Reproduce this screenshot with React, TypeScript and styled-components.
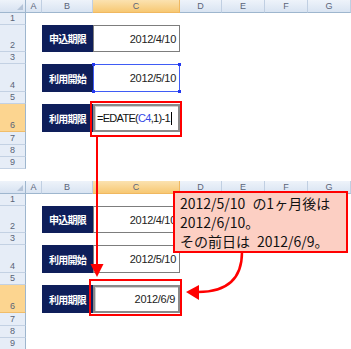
import styled, { createGlobalStyle, css } from "styled-components";

const GlobalStyle = createGlobalStyle`
  html, body {
    margin: 0;
    padding: 0;
    background: #fff;
  }
  body {
    font-family: "Liberation Sans", "Noto Sans CJK JP", sans-serif;
  }
`;

const COLS = ["A", "B", "C", "D", "E", "F", "G"];
const ROWS = [1, 2, 3, 4, 5, 6, 7, 8, 9];

type Step = "before" | "after";

function Sheet({ step }: { step: Step }) {
  return (
    <Grid>
      <Corner />
      {COLS.map((c) => (
        <ColHead key={c} active={c === "C"}>
          {c}
        </ColHead>
      ))}
      {ROWS.map((r) => (
        <RowHead key={r} row={r} active={r === 6}>
          {r}
        </RowHead>
      ))}

      <Label row={2}>申込期限</Label>
      <Value row={2}>2012/4/10</Value>

      <Label row={4}>利用開始</Label>
      {step === "before" ? (
        <Value row={4} kind="focus">
          2012/5/10
          <Handle pos="tl" />
          <Handle pos="tr" />
          <Handle pos="bl" />
          <Handle pos="br" />
        </Value>
      ) : (
        <Value row={4}>2012/5/10</Value>
      )}

      <Label row={6}>利用期限</Label>
      {step === "before" ? (
        <Value row={6} kind="edit">
          =EDATE(<Ref>C4</Ref>,1)-1
          <Caret />
        </Value>
      ) : (
        <Value row={6} kind="result">
          2012/6/9
        </Value>
      )}
    </Grid>
  );
}

export default function App() {
  return (
    <>
      <GlobalStyle />
      <Page>
        <Sheet step="before" />
        <Sheet step="after" />

        <RedFrame style={{ left: 90, top: 101, width: 92, height: 36 }} />
        <RedFrame style={{ left: 89, top: 279, width: 93, height: 37 }} />

        <Arrows width="351" height="349" viewBox="0 0 351 349">
          <line x1="97" y1="137" x2="97" y2="266" stroke="#ff0000" strokeWidth="2" />
          <polygon points="90.5,264 103.5,264 97,277" fill="#ff0000" />
          <path
            d="M242 252 C 242 278 228 292 198 292"
            fill="none"
            stroke="#ff0000"
            strokeWidth="2.5"
          />
          <polygon points="186,292 199,285 199,300" fill="#ff0000" />
        </Arrows>

        <Callout>
          2012/5/10{"\u2002"}の1ヶ月後は
          <br />
          2012/6/10。
          <br />
          その前日は{"\u2002"}2012/6/9。
        </Callout>
      </Page>
    </>
  );
}

const Page = styled.div`
  position: relative;
  width: 351px;
  height: 349px;
  overflow: hidden;
  display: flex;
  flex-direction: column;
  gap: 12px;
`;

const Grid = styled.div`
  display: grid;
  grid-template-columns: 26px 16px 51px 87px 42px 43px 43px 43px;
  grid-template-rows: 13px 12px 27px 12px 28px 12px 28px 13px 12px 12px;
  background: #fff;
  flex: none;
`;

const headBase = css`
  box-sizing: border-box;
  font-family: "Liberation Sans", sans-serif;
  font-size: 9px;
  color: #5a6478;
  display: flex;
  justify-content: center;
`;

const Corner = styled.div`
  ${headBase};
  position: relative;
  background: linear-gradient(#eef3fa, #d7e2f1);
  border-right: 1px solid #9eb6ce;
  border-bottom: 1px solid #9eb6ce;
  &::after {
    content: "";
    position: absolute;
    right: 2px;
    bottom: 2px;
    border-left: 6px solid transparent;
    border-bottom: 6px solid #b5c4d8;
  }
`;

const ColHead = styled.div<{ active?: boolean }>`
  ${headBase};
  align-items: center;
  background: ${(p) =>
    p.active
      ? "linear-gradient(#fbe2b0, #f7c873)"
      : "linear-gradient(#eef3fa, #d9e4f2)"};
  border-right: 1px solid ${(p) => (p.active ? "#f0b860" : "#c0cfe2")};
  border-bottom: 1px solid ${(p) => (p.active ? "#f0b860" : "#9eb6ce")};
`;

const RowHead = styled.div<{ row: number; active?: boolean }>`
  ${headBase};
  grid-column: 1;
  grid-row: ${(p) => p.row + 1};
  align-items: flex-end;
  line-height: 10px;
  padding-bottom: 1px;
  background: ${(p) => (p.active ? "#fcd590" : "#e6edf7")};
  border-right: 1px solid #9eb6ce;
  border-bottom: 1px solid ${(p) => (p.active ? "#f0bd6a" : "#c3d1e3")};
`;

const Label = styled.div<{ row: number }>`
  grid-column: 3;
  grid-row: ${(p) => p.row + 1};
  background: #0e1e5a;
  color: #fff;
  font-family: "Noto Sans CJK JP", sans-serif;
  font-weight: 700;
  font-size: 10px;
  letter-spacing: -0.8px;
  display: flex;
  align-items: center;
  justify-content: center;
`;

const Value = styled.div<{ row: number; kind?: "plain" | "focus" | "edit" | "result" }>`
  position: relative;
  grid-column: 4;
  grid-row: ${(p) => p.row + 1};
  box-sizing: border-box;
  display: flex;
  align-items: center;
  justify-content: ${(p) => (p.kind === "edit" ? "flex-start" : "flex-end")};
  padding: 0 3px;
  font-family: "Liberation Sans", "Noto Sans CJK JP", sans-serif;
  font-size: 11px;
  letter-spacing: -0.3px;
  color: #222;
  background: #fff;
  border: 1px solid #7d7d7d;
  ${(p) =>
    p.kind === "focus" &&
    css`
      border-color: #3f5cf5;
    `}
  ${(p) =>
    (p.kind === "edit" || p.kind === "result") &&
    css`
      border: 2px solid #8a8a8a;
      box-shadow: inset 1px 1px 0 #d0d0d0;
    `}
  ${(p) =>
    p.kind === "edit" &&
    css`
      padding-left: 2px;
      font-size: 11px;
      letter-spacing: -0.7px;
      color: #111;
    `}
`;

const Handle = styled.span<{ pos: "tl" | "tr" | "bl" | "br" }>`
  position: absolute;
  width: 3px;
  height: 3px;
  background: #2438f0;
  ${(p) => (p.pos[0] === "t" ? "top: -2px;" : "bottom: -2px;")}
  ${(p) => (p.pos[1] === "l" ? "left: -2px;" : "right: -2px;")}
`;

const Ref = styled.span`
  color: #3348e6;
`;

const Caret = styled.span`
  display: inline-block;
  width: 1px;
  height: 13px;
  margin-left: 1px;
  background: #000;
`;

const RedFrame = styled.div`
  position: absolute;
  box-sizing: border-box;
  border: 2px solid #ff0000;
`;

const Arrows = styled.svg`
  position: absolute;
  left: 0;
  top: 0;
  pointer-events: none;
`;

const Callout = styled.div`
  position: absolute;
  left: 173px;
  top: 191px;
  width: 175px;
  height: 62px;
  box-sizing: border-box;
  padding: 1px 0 0 5px;
  border: 2px solid #ff0000;
  background: #fccfc3;
  color: #111;
  font-family: "Noto Sans CJK JP", sans-serif;
  font-size: 14px;
  line-height: 19px;
  white-space: nowrap;
`;
